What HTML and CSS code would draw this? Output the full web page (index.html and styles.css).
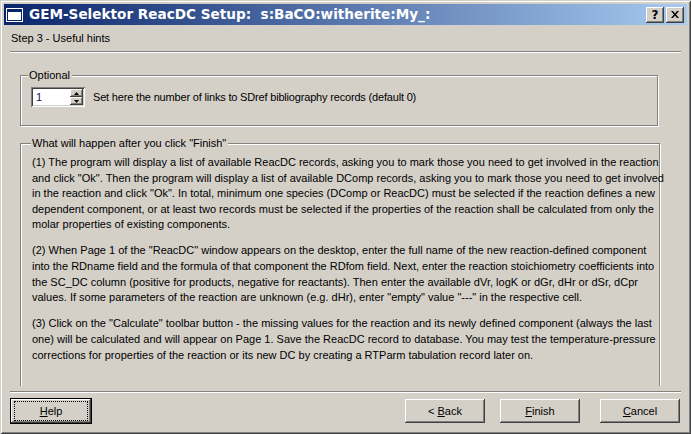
FILE: index.html
```html
<!DOCTYPE html>
<html>
<head>
<meta charset="utf-8">
<link rel="stylesheet" href="styles.css">
</head>
<body>
<div class="window">
  <div class="titlebar">
    <svg class="app-icon" width="17" height="14" viewBox="0 0 17 14">
      <rect x="0" y="0" width="17" height="14" fill="#ffffff"/>
      <rect x="1" y="1" width="15" height="12" fill="#0a246a"/>
      <rect x="2" y="4" width="13" height="8" fill="#ffffff"/>
    </svg>
    <span class="title">GEM-Selektor ReacDC Setup:  s:BaCO:witherite:My_:</span>
    <div class="caption-btns">
      <span class="cap cap-help">?</span>
      <span class="cap">
        <svg width="8" height="7" viewBox="0 0 8 7"><path d="M0 0h2l2 2.5 2-2.5h2l-3 3.5 3 3.5h-2l-2-2.5-2 2.5h-2l3-3.5z" fill="#000"/></svg>
      </span>
    </div>
  </div>
  <div class="body">
    <div class="step">Step 3 - Useful hints</div>
    <div class="sep"></div>
    <div class="group group-opt">
      <span class="group-label label-opt">Optional</span>
      <div class="spin">
        <span class="spin-value">1</span>
        <div class="spin-btns">
          <span class="spin-btn"><svg width="5" height="3" viewBox="0 0 5 3"><path d="M2.5 0L5 3H0z" fill="#000"/></svg></span>
          <span class="spin-btn"><svg width="5" height="3" viewBox="0 0 5 3"><path d="M0 0h5L2.5 3z" fill="#000"/></svg></span>
        </div>
      </div>
      <span class="opt-text">Set here the number of links to SDref bibliography records (default 0)</span>
    </div>
    <div class="clip">
      <div class="group group-hints">
        <span class="group-label label-hints">What will happen after you click "Finish"</span>
        <p>(1) The program will display a list of available ReacDC records, asking you to mark those you need to get involved in the reaction<br>and click "Ok". Then the program will display a list of available DComp records, asking you to mark those you need to get involved<br>in the reaction and click "Ok". In total, minimum one species (DComp or ReacDC) must be selected if the reaction defines a new<br>dependent component, or at least two records must be selected if the properties of the reaction shall be calculated from only the<br>molar properties of existing components.</p>
        <p>(2) When Page 1 of the "ReacDC" window appears on the desktop, enter the full name of the new reaction-defined component<br>into the RDname field and the formula of that component the RDfom field. Next, enter the reaction stoichiometry coefficients into<br>the SC_DC column (positive for products, negative for reactants). Then enter the available dVr, logK or dGr, dHr or dSr, dCpr<br>values. If some parameters of the reaction are unknown (e.g. dHr), enter "empty" value "---" in the respective cell.</p>
        <p>(3) Click on the "Calculate" toolbar button - the missing values for the reaction and its newly defined component (always the last<br>one) will be calculated and will appear on Page 1. Save the ReacDC record to database. You may test the temperature-pressure<br>corrections for properties of the reaction or its new DC by creating a RTParm tabulation record later on.</p>
      </div>
    </div>
    <div class="sep sep-bottom"></div>
    <div class="buttons">
      <span class="btn btn-default"><span class="focus"><span><u>H</u>elp</span></span></span>
      <span class="btn btn-back"><span>&lt; <u>B</u>ack</span></span>
      <span class="btn btn-finish"><span><u>F</u>inish</span></span>
      <span class="btn btn-cancel"><span><u>C</u>ancel</span></span>
    </div>
  </div>
</div>
</body>
</html>
```

FILE: styles.css
```css
html, body {
  margin: 0;
  padding: 0;
  background: #d4d0c8;
}

.window {
  width: 691px;
  height: 434px;
  box-sizing: border-box;
  padding: 4px;
  background: #d4d0c8;
  box-shadow: inset 1px 1px 0 #d4d0c8, inset -1px -1px 0 #404040, inset 2px 2px 0 #ffffff, inset -2px -2px 0 #808080;
  display: flex;
  flex-direction: column;
  font-family: "Liberation Sans", Arial, sans-serif;
  font-size: 11px;
  color: #000;
}

.titlebar {
  height: 21px;
  flex: none;
  display: flex;
  align-items: center;
  background: linear-gradient(to right, #0a246a, #a6caf0);
  padding-left: 2px;
  padding-right: 3px;
}

.app-icon {
  flex: none;
  display: block;
}

.title {
  margin-left: 6px;
  font-family: "DejaVu Sans", Verdana, sans-serif;
  font-weight: bold;
  font-size: 13.6px;
  color: #fff;
  white-space: pre;
  line-height: 21px;
}

.caption-btns {
  margin-left: auto;
  display: flex;
  gap: 2px;
}

.cap {
  width: 18px;
  height: 16px;
  box-sizing: border-box;
  background: #d4d0c8;
  box-shadow: inset -1px -1px 0 #404040, inset 1px 1px 0 #ffffff, inset -2px -2px 0 #808080;
  display: flex;
  align-items: center;
  justify-content: center;
}

.cap-help {
  font-family: "DejaVu Sans", sans-serif;
  font-weight: bold;
  font-size: 12px;
  line-height: 16px;
}

.body {
  flex: 1;
  display: flex;
  flex-direction: column;
  padding: 0 6px;
}

.step {
  margin-top: 7px;
  padding-left: 1px;
  line-height: 13px;
}

.sep {
  margin-top: 6px;
  height: 0;
  border-top: 1px solid #808080;
  border-bottom: 1px solid #ffffff;
}

.group {
  position: relative;
  border: 1px solid #808080;
  box-shadow: inset 1px 1px 0 #ffffff, 1px 1px 0 #ffffff;
}

.group-label {
  position: absolute;
  top: -7px;
  background: #d4d0c8;
  line-height: 13px;
  padding: 0 2px 0 1px;
  white-space: nowrap;
}

.label-opt {
  left: 7px;
}

.label-hints {
  left: 10px;
}

.group-opt {
  margin: 22px 23px 0 10px;
  display: flex;
  align-items: flex-start;
  padding: 11px 0 0 10px;
  box-sizing: border-box;
  height: 51px;
}

.spin {
  width: 54px;
  height: 20px;
  box-sizing: border-box;
  background: #fff;
  box-shadow: inset 1px 1px 0 #808080, inset -1px -1px 0 #ffffff, inset 2px 2px 0 #404040, inset -2px -2px 0 #d4d0c8;
  display: flex;
  padding: 2px;
}

.spin-value {
  flex: 1;
  padding-left: 3px;
  line-height: 16px;
  color: #2a0d48;
}

.spin-btns {
  width: 13px;
  display: flex;
  flex-direction: column;
}

.spin-btn {
  flex: 1;
  background: #d4d0c8;
  box-shadow: inset -1px -1px 0 #404040, inset 1px 1px 0 #ffffff, inset -2px -2px 0 #808080;
  display: flex;
  align-items: center;
  justify-content: center;
}

.spin-btn svg {
  display: block;
}

.opt-text {
  margin-left: 8px;
  line-height: 20px;
  letter-spacing: -0.18px;
}

.clip {
  margin-top: 10px;
  height: 250px;
  overflow: hidden;
  padding-top: 7px;
  padding-right: 2px;
  box-sizing: border-box;
}

.group-hints {
  margin: 0 19px 0 10px;
  height: 320px;
  padding: 11px 0 0 11px;
}

.group-hints p {
  margin: 0 0 10.5px 0;
  line-height: 15.6px;
  white-space: nowrap;
}

.sep-bottom {
  margin-top: 5px;
}

.buttons {
  margin-top: 5px;
  display: flex;
  align-items: flex-start;
}

.btn {
  width: 80px;
  height: 24px;
  box-sizing: border-box;
  margin-top: 1px;
  background: #d4d0c8;
  box-shadow: inset -1px -1px 0 #404040, inset 1px 1px 0 #ffffff, inset -2px -2px 0 #808080;
  display: flex;
  align-items: center;
  justify-content: center;
  line-height: 13px;
  white-space: pre;
}

.btn-default {
  width: 82px;
  height: 26px;
  margin-top: 0;
  border: 1px solid #000;
  padding: 2px 3px;
}

.focus {
  flex: 1;
  align-self: stretch;
  border: 1px dotted #000;
  display: flex;
  align-items: center;
  justify-content: center;
}

.btn-back {
  margin-left: auto;
}

.btn-finish {
  margin-left: 15px;
}

.btn-cancel {
  margin-left: 20px;
  margin-right: 1px;
}
```
